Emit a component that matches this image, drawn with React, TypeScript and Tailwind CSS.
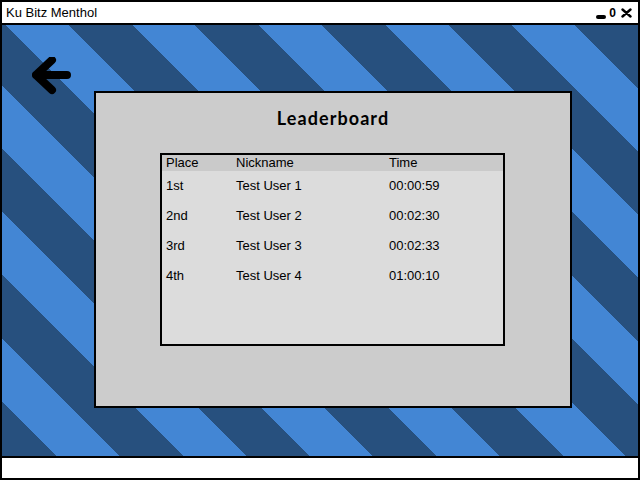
import React from "react";

const rows = [
  { place: "1st", name: "Test User 1", time: "00:00:59" },
  { place: "2nd", name: "Test User 2", time: "00:02:30" },
  { place: "3rd", name: "Test User 3", time: "00:02:33" },
  { place: "4th", name: "Test User 4", time: "01:00:10" },
];

export default function App() {
  return (
    <div className="w-[640px] h-[480px] flex flex-col border-2 border-black bg-white font-['Liberation_Sans',Arial,sans-serif] text-black">
      {/* title bar */}
      <div className="h-[23px] flex items-center justify-between pl-[4px] pr-[6px] border-b-2 border-black bg-white">
        <span className="text-[13px] leading-none">Ku Bitz Menthol</span>
        <div className="flex items-center gap-[3px]">
          <div className="w-[10px] h-[4px] mt-[8px] rounded-[2px] bg-black" />
          <span className="text-[12px] leading-none font-bold">0</span>
          <svg width="11" height="10" viewBox="0 0 11 10" className="ml-[2px]">
            <path d="M1.5 1.5 L9.5 8.5 M9.5 1.5 L1.5 8.5" stroke="black" strokeWidth="2.4" strokeLinecap="round" />
          </svg>
        </div>
      </div>

      {/* striped canvas */}
      <div className="flex-1 flex bg-[repeating-linear-gradient(45deg,#27507e_0px,#27507e_38.7px,#4386d4_38.7px,#4386d4_83.2px,#27507e_83.2px,#27507e_89.5px)]">
        <svg width="40" height="40" viewBox="0 0 40 40" className="ml-[30px] mt-[32px] shrink-0">
          <path d="M20 3 L4 18 L20 33 M4 18 L35 18" fill="none" stroke="black" strokeWidth="8" strokeLinecap="round" strokeLinejoin="round" />
        </svg>

        <div className="ml-[22px] mt-[66px] w-[478px] h-[317px] border-2 border-black bg-[#cccccc] flex flex-col">
          <h1 className="pt-[13px] text-center text-[18px] leading-[24px] font-bold tracking-[0.06em] font-['Lato',sans-serif]">
            Leaderboard
          </h1>

          <div className="ml-[64px] mt-[23px] w-[345px] h-[193px] border-2 border-black bg-[#dcdcdc] text-[13px]">
            <div className="h-[16px] flex items-center bg-[#cacaca] pl-[4px]">
              <span className="w-[70px]">Place</span>
              <span className="w-[153px]">Nickname</span>
              <span>Time</span>
            </div>
            {rows.map((r) => (
              <div key={r.place} className="h-[30px] flex items-center pl-[4px]">
                <span className="w-[70px]">{r.place}</span>
                <span className="w-[153px]">{r.name}</span>
                <span>{r.time}</span>
              </div>
            ))}
          </div>
        </div>
      </div>

      {/* status bar */}
      <div className="h-[22px] border-t-2 border-black bg-white" />
    </div>
  );
}
